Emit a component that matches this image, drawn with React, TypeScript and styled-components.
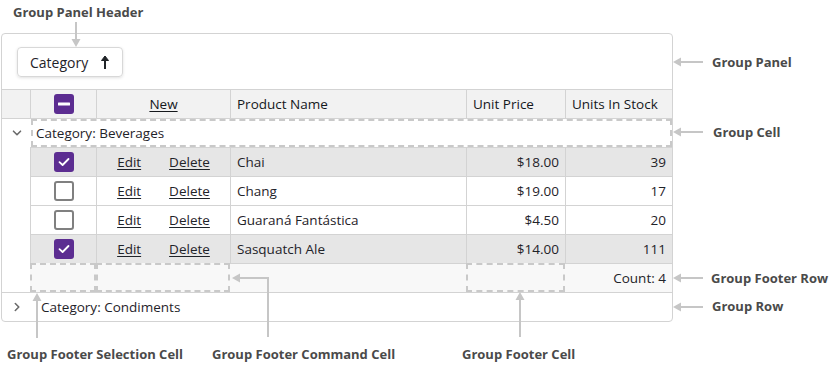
import React from "react";
import styled, { createGlobalStyle } from "styled-components";

const GlobalStyle = createGlobalStyle`
  html, body {
    margin: 0;
    padding: 0;
    background: #ffffff;
  }
  body {
    font-family: "Open Sans", "Liberation Sans", sans-serif;
  }
`;

const LINE = "#d3d3d3";
const TEXT = "#1f2329";

const Page = styled.div`
  position: relative;
  width: 840px;
  height: 366px;
  padding: 33px 0 0 1px;
  box-sizing: border-box;
  overflow: hidden;
`;

const GridFrame = styled.div`
  width: 672px;
  box-sizing: border-box;
  border: 1px solid ${LINE};
  border-radius: 4px;
  overflow: hidden;
  color: ${TEXT};
  font-size: 13.5px;
`;

const GroupPanel = styled.div`
  height: 55px;
  box-sizing: border-box;
  padding: 13px 0 0 15px;
`;

const GroupChip = styled.div`
  display: inline-flex;
  align-items: center;
  gap: 12px;
  width: 106px;
  height: 30px;
  box-sizing: border-box;
  padding-left: 12px;
  border: 1px solid #d8d8d8;
  border-radius: 4px;
  box-shadow: 0 1px 3px rgba(0, 0, 0, 0.12);
  font-size: 14px;
`;

const Row = styled.div`
  display: grid;
  grid-template-columns: 28px 66px 134px 236px 99px 107px;
  height: 29px;
`;

type Align = "left" | "center" | "right";

const Cell = styled.div<{ $align?: Align; $bg?: string; $noTop?: boolean; $noLeft?: boolean; $span?: number }>`
  box-sizing: border-box;
  height: 29px;
  display: flex;
  align-items: center;
  justify-content: ${(p) => (p.$align === "right" ? "flex-end" : p.$align === "center" ? "center" : "flex-start")};
  gap: 28px;
  padding: 0 6px;
  border-top: ${(p) => (p.$noTop ? "none" : `1px solid ${LINE}`)};
  border-left: ${(p) => (p.$noLeft ? "none" : `1px solid ${LINE}`)};
  background: ${(p) => p.$bg ?? "transparent"};
  white-space: nowrap;
  grid-column: ${(p) => (p.$span ? `span ${p.$span}` : "auto")};
`;

const HeaderCell = styled(Cell)`
  background: #f2f2f2;
  color: #15181c;
`;

const IndentCell = styled(Cell)`
  justify-content: center;
  padding: 0 0 0 1px;
  border-left: none;
`;

const DashedCell = styled.div<{ $bg?: string }>`
  box-sizing: border-box;
  height: 29px;
  border: 2px dashed #c9c9c9;
  background: ${(p) => p.$bg ?? "transparent"};
`;

const GroupCell = styled(Cell)`
  padding: 0;
  border-left: none;
  align-items: stretch;
`;

const GroupCaption = styled.div<{ $dashed?: boolean; $indent: number }>`
  flex: 1;
  display: flex;
  align-items: center;
  box-sizing: border-box;
  padding-left: ${(p) => p.$indent}px;
  border: ${(p) => (p.$dashed ? "2px dashed #c9c9c9" : "none")};
  margin-left: ${(p) => (p.$dashed ? "1px" : "0")};
`;

const LinkText = styled.span`
  text-decoration: underline;
  text-underline-offset: 2px;
  cursor: pointer;
`;

const CheckBox = styled.span<{ $state: "checked" | "unchecked" | "mixed" }>`
  width: 20px;
  height: 20px;
  box-sizing: border-box;
  border-radius: 3px;
  display: inline-flex;
  align-items: center;
  justify-content: center;
  background: ${(p) => (p.$state === "unchecked" ? "#ffffff" : "#5c2d91")};
  border: ${(p) => (p.$state === "unchecked" ? "2px solid #808080" : "none")};
`;

const Callout = styled.span<{ $x: number; $y: number }>`
  position: absolute;
  left: ${(p) => p.$x}px;
  top: ${(p) => p.$y}px;
  transform: translateY(-50%);
  font-family: "Open Sans", "Liberation Sans", sans-serif;
  font-weight: 700;
  font-size: 13px;
  color: #4a4a4a;
  white-space: nowrap;
`;

const Overlay = styled.svg`
  position: absolute;
  left: 0;
  top: 0;
  pointer-events: none;
`;

const Check = ({ state }: { state: "checked" | "unchecked" | "mixed" }) => (
  <CheckBox $state={state}>
    {state === "checked" && (
      <svg width="12" height="10" viewBox="0 0 12 10">
        <path d="M1.5 5.2 L4.6 8 L10.5 2" fill="none" stroke="#fff" strokeWidth="1.8" strokeLinecap="round" strokeLinejoin="round" />
      </svg>
    )}
    {state === "mixed" && (
      <svg width="12" height="4" viewBox="0 0 12 4">
        <rect x="0" y="0.5" width="12" height="3" rx="0.5" fill="#fff" />
      </svg>
    )}
  </CheckBox>
);

const Chevron = ({ open }: { open: boolean }) => (
  <svg width="10" height="10" viewBox="0 0 10 10">
    <path
      d={open ? "M1.5 3.2 L5 6.7 L8.5 3.2" : "M3.3 1.5 L6.8 5 L3.3 8.5"}
      fill="none"
      stroke="#6b6b6b"
      strokeWidth="1.6"
      strokeLinecap="round"
      strokeLinejoin="round"
    />
  </svg>
);

const SortUp = () => (
  <svg width="10" height="15" viewBox="0 0 10 15">
    <path d="M5 1.5 L5 14" stroke="#212529" strokeWidth="2" />
    <path d="M1.5 5.5 L5 1 L8.5 5.5 Z" fill="#212529" stroke="#212529" strokeWidth="1" strokeLinejoin="round" />
  </svg>
);

type Product = { name: string; price: string; stock: number; selected: boolean };

const products: Product[] = [
  { name: "Chai", price: "$18.00", stock: 39, selected: true },
  { name: "Chang", price: "$19.00", stock: 17, selected: false },
  { name: "Guaraná Fantástica", price: "$4.50", stock: 20, selected: false },
  { name: "Sasquatch Ale", price: "$14.00", stock: 111, selected: true },
];

type Arrow = number[][];

const arrows: Arrow[] = [
  [[76, 22], [76, 47]],
  [[703, 62], [673, 62]],
  [[703, 132], [673, 132]],
  [[703, 278], [673, 278]],
  [[703, 307], [673, 307]],
  [[37, 338], [37, 293]],
  [[268, 337], [268, 278], [232, 278]],
  [[520, 337], [520, 292]],
];

const callouts = [
  { text: "Group Panel Header", x: 13, y: 12 },
  { text: "Group Panel", x: 712, y: 62 },
  { text: "Group Cell", x: 713, y: 132 },
  { text: "Group Footer Row", x: 711, y: 278 },
  { text: "Group Row", x: 712, y: 306 },
  { text: "Group Footer Selection Cell", x: 7, y: 354 },
  { text: "Group Footer Command Cell", x: 212, y: 354 },
  { text: "Group Footer Cell", x: 462, y: 354 },
];

const arrowHead = (pts: number[][]) => {
  const [x1, y1] = pts[pts.length - 2];
  const [x2, y2] = pts[pts.length - 1];
  const len = Math.hypot(x2 - x1, y2 - y1);
  const ux = (x2 - x1) / len;
  const uy = (y2 - y1) / len;
  const bx = x2 - ux * 8;
  const by = y2 - uy * 8;
  return `${x2},${y2} ${bx - uy * 4.5},${by + ux * 4.5} ${bx + uy * 4.5},${by - ux * 4.5}`;
};

const shaft = (pts: number[][]) => {
  const [x1, y1] = pts[pts.length - 2];
  const [x2, y2] = pts[pts.length - 1];
  const len = Math.hypot(x2 - x1, y2 - y1);
  const end = [x2 - ((x2 - x1) / len) * 7, y2 - ((y2 - y1) / len) * 7];
  return [...pts.slice(0, -1), end].map((p) => p.join(",")).join(" ");
};

const SELECTED = "#e6e6e6";
const FOOTER = "#f8f8f8";

export default function App() {
  return (
    <>
      <GlobalStyle />
      <Page>
        <GridFrame>
          <GroupPanel>
            <GroupChip>
              Category
              <SortUp />
            </GroupChip>
          </GroupPanel>

          <Row>
            <HeaderCell $noLeft />
            <HeaderCell $align="center">
              <Check state="mixed" />
            </HeaderCell>
            <HeaderCell $align="center">
              <LinkText>New</LinkText>
            </HeaderCell>
            <HeaderCell>Product Name</HeaderCell>
            <HeaderCell>Unit Price</HeaderCell>
            <HeaderCell>Units In Stock</HeaderCell>
          </Row>

          <Row>
            <IndentCell>
              <Chevron open />
            </IndentCell>
            <GroupCell $span={5}>
              <GroupCaption $dashed $indent={3}>Category: Beverages</GroupCaption>
            </GroupCell>
          </Row>

          {products.map((p) => {
            const bg = p.selected ? SELECTED : undefined;
            return (
              <Row key={p.name}>
                <IndentCell $noTop />
                <Cell $align="center" $bg={bg}>
                  <Check state={p.selected ? "checked" : "unchecked"} />
                </Cell>
                <Cell $align="center" $bg={bg}>
                  <LinkText>Edit</LinkText>
                  <LinkText>Delete</LinkText>
                </Cell>
                <Cell $bg={bg}>{p.name}</Cell>
                <Cell $align="right" $bg={bg}>{p.price}</Cell>
                <Cell $align="right" $bg={bg}>{p.stock}</Cell>
              </Row>
            );
          })}

          <Row>
            <IndentCell $noTop />
            <DashedCell $bg={FOOTER} />
            <DashedCell $bg={FOOTER} />
            <Cell $bg={FOOTER} $noLeft />
            <DashedCell $bg={FOOTER} />
            <Cell $align="right" $bg={FOOTER} $noLeft>
              Count: 4
            </Cell>
          </Row>

          <Row>
            <IndentCell>
              <Chevron open={false} />
            </IndentCell>
            <GroupCell $span={5}>
              <GroupCaption $indent={11}>Category: Condiments</GroupCaption>
            </GroupCell>
          </Row>
        </GridFrame>

        <Overlay width="840" height="366">
          {arrows.map((a, i) => (
            <g key={i}>
              <polyline points={shaft(a)} fill="none" stroke="#c6c6c6" strokeWidth="2" />
              <polygon points={arrowHead(a)} fill="#c6c6c6" />
            </g>
          ))}
        </Overlay>

        {callouts.map((c) => (
          <Callout key={c.text} $x={c.x} $y={c.y}>
            {c.text}
          </Callout>
        ))}
      </Page>
    </>
  );
}
